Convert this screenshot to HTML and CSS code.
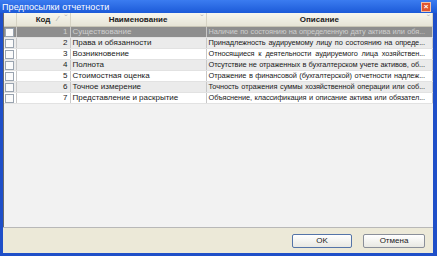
FILE: index.html
```html
<!DOCTYPE html>
<html lang="ru">
<head>
  <meta charset="UTF-8">
  <title>Предпосылки отчетности</title>
  <link rel="stylesheet" href="styles.css">
</head>
<body>
  <div class="dialog">
    <div class="titlebar">
      <span class="title">Предпосылки отчетности</span>
      <span class="close">&#215;</span>
    </div>

    <div class="content">
      <table class="grid">
        <colgroup>
          <col class="c-check">
          <col class="c-code">
          <col class="c-name">
          <col class="c-desc">
        </colgroup>
        <thead>
          <tr>
            <th></th>
            <th class="h-code">Код <span class="sort">&#8260;</span><span class="drop">&#711;</span></th>
            <th>Наименование <span class="drop">&#711;</span></th>
            <th>Описание <span class="drop">&#711;</span></th>
          </tr>
        </thead>
        <tbody>
          <tr class="selected">
            <td><span class="box"></span></td>
            <td class="num">1</td>
            <td>Существование</td>
            <td class="desc">Наличие по состоянию на определенную дату актива или обя...</td>
          </tr>
          <tr class="alt">
            <td><span class="box"></span></td>
            <td class="num">2</td>
            <td>Права и обязанности</td>
            <td class="desc">Принадлежность аудируемому лицу по состоянию на опреде...</td>
          </tr>
          <tr>
            <td><span class="box"></span></td>
            <td class="num">3</td>
            <td>Возникновение</td>
            <td class="desc">Относящиеся к деятельности аудируемого лица хозяйствен...</td>
          </tr>
          <tr class="alt">
            <td><span class="box"></span></td>
            <td class="num">4</td>
            <td>Полнота</td>
            <td class="desc">Отсутствие не отраженных в бухгалтерском учете активов, об...</td>
          </tr>
          <tr>
            <td><span class="box"></span></td>
            <td class="num">5</td>
            <td>Стоимостная оценка</td>
            <td class="desc">Отражение в финансовой (бухгалтерской) отчетности надлеж...</td>
          </tr>
          <tr class="alt">
            <td><span class="box"></span></td>
            <td class="num">6</td>
            <td>Точное измерение</td>
            <td class="desc">Точность отражения суммы хозяйственной операции или соб...</td>
          </tr>
          <tr>
            <td><span class="box"></span></td>
            <td class="num">7</td>
            <td>Представление и раскрытие</td>
            <td class="desc">Объяснение, классификация и описание актива или обязател...</td>
          </tr>
        </tbody>
      </table>
    </div>

    <div class="footer">
      <button class="btn default">OK</button>
      <button class="btn">Отмена</button>
    </div>
  </div>
</body>
</html>
```

FILE: styles.css
```css
body { margin: 0; background: #ffffff; font-family: "Liberation Sans", Arial, sans-serif; }

.dialog { width: 437px; height: 256px; box-sizing: border-box; display: flex; flex-direction: column; background: #1f4fc8; padding: 0 4px 3px 3px; }

.titlebar { height: 13px; display: flex; align-items: center; justify-content: space-between; background: linear-gradient(#3b7cf0, #1c5ad8); margin: 0 -4px 0 -3px; padding: 0 6px 0 2px; }
.title { color: #ffffff; font-size: 9px; letter-spacing: 0.1px; }
.close { width: 8px; height: 8px; background: #e0552e; border: 1px solid #f3c0a8; color: #ffffff; font-size: 8px; line-height: 8px; text-align: center; font-weight: bold; }

.content { flex: 1; background: #f2f2f2; border-left: 1px solid #6a6a6a; }

.grid { width: 100%; table-layout: fixed; border-collapse: collapse; font-size: 8px; color: #202020; }
.c-check { width: 12px; }
.c-code { width: 54px; }
.c-name { width: 136px; }

.grid th { height: 13px; padding: 0 2px; background: linear-gradient(#f7f6ee, #e6e4d6); border-right: 1px solid #d6d3c4; border-bottom: 1px solid #c9c6b6; font-weight: bold; font-size: 8px; text-align: center; position: relative; }
.drop { position: absolute; right: 2px; top: 1px; color: #b8b8b8; font-weight: normal; font-size: 10px; }
.sort { position: absolute; right: 11px; top: 1px; color: #a0a0a0; font-weight: normal; }

.grid td { height: 10px; padding: 0 2px; background: #ffffff; border-right: 1px solid #c8c8c8; border-bottom: 1px solid #e2e2e2; white-space: nowrap; overflow: hidden; line-height: 10px; }
.grid tr.alt td { background: #ebebeb; }
.grid tr.selected td { background: #8e8e8e; color: #cfcfcf; }
.grid td.num { text-align: right; }
.grid td.desc { font-size: 7.4px; letter-spacing: -0.1px; text-align: justify; text-align-last: justify; padding-right: 7px; }

.box { display: block; width: 7px; height: 7px; border: 1px solid #9aa4b0; background: #fbfbfb; margin-left: -1px; }

.footer { height: 26px; box-sizing: border-box; border-top: 1px solid #b8b8b8; background: #ece9d8; display: flex; justify-content: flex-end; align-items: center; gap: 11px; padding: 0 8px 0 0; }
.btn { height: 14px; padding: 0; font-family: "Liberation Sans", Arial, sans-serif; font-size: 8px; color: #202020; background: linear-gradient(#ffffff, #e8e8e2); border: 1px solid #8a8f99; border-radius: 2px; }
.btn.default { width: 60px; border-color: #5474a8; }
.btn:not(.default) { width: 62px; }
```
